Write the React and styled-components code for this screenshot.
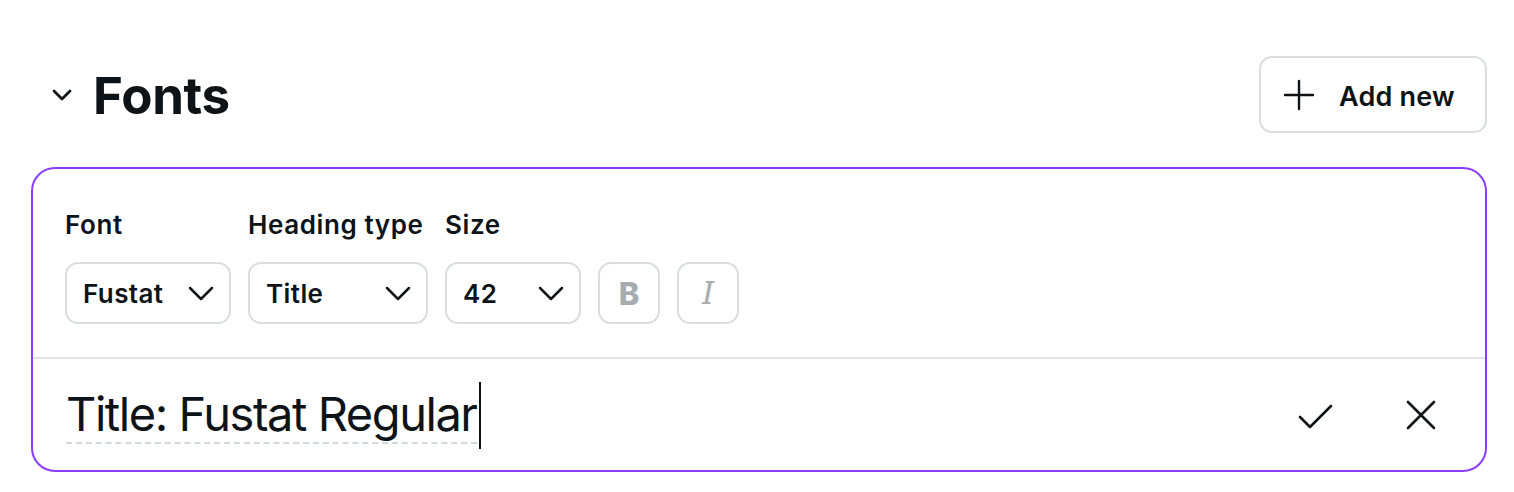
import React from 'react';
import styled, { createGlobalStyle } from 'styled-components';

const GlobalStyle = createGlobalStyle`
    body {
        margin: 0;
        background: #ffffff;
        font-family: Inter, "Noto Sans", sans-serif;
        color: #0e1318;
    }
`;

const Page = styled.div`
    width: 1456px;
    padding: 56px 0 0 31px;
`;

const Header = styled.div`
    display: flex;
    align-items: center;
    justify-content: space-between;
    height: 77px;
`;

const HeaderLeft = styled.div`
    display: flex;
    align-items: center;
    padding-left: 20px;
    gap: 20px;
`;

const Title = styled.h2`
    margin: 0;
    font-size: 51px;
    font-weight: 650;
    letter-spacing: -0.3px;
    color: #0e1318;
    line-height: 1;
    margin-top: 2px;
`;

const AddButton = styled.button`
    display: flex;
    align-items: center;
    gap: 24px;
    height: 77px;
    width: 228px;
    padding: 3px 22px 0;
    box-sizing: border-box;
    background: #fff;
    border: 2px solid #dadde1;
    border-radius: 13px;
    font-family: inherit;
    font-size: 27px;
    font-weight: 600;
    letter-spacing: 0.2px;
    color: #0e1318;
    cursor: pointer;

    svg {
        margin-top: -3px;
    }
`;

const Card = styled.div`
    margin-top: 34px;
    border: 2px solid #8b3dff;
    border-radius: 24px;
    height: 305px;
    box-sizing: border-box;
    display: flex;
    flex-direction: column;
`;

const Controls = styled.div`
    display: flex;
    align-items: flex-end;
    gap: 17px;
    padding: 40px 32px 33px;
    border-bottom: 2px solid #e2e4e7;
`;

const Field = styled.div`
    display: flex;
    flex-direction: column;
    gap: 21px;
`;

const Label = styled.span`
    font-size: 26px;
    font-weight: 600;
    line-height: 32px;
    letter-spacing: 0.6px;
`;

const Select = styled.div`
    display: flex;
    align-items: center;
    justify-content: space-between;
    width: ${p => p.$w}px;
    height: 62px;
    box-sizing: border-box;
    padding: 0 15px 0 16px;
    border: 2px solid #dadde1;
    border-radius: 13px;
    font-size: 26px;
    font-weight: 600;
    letter-spacing: 0.4px;
`;

const StyleButton = styled.div`
    display: flex;
    align-items: center;
    justify-content: center;
    width: 62px;
    height: 62px;
    box-sizing: border-box;
    border: 2px solid #dadde1;
    border-radius: 13px;
    color: #a7acb1;
    font-size: 31px;
    font-weight: ${p => (p.$italic ? 400 : 800)};
    font-style: ${p => (p.$italic ? 'italic' : 'normal')};
    font-family: ${p => (p.$italic ? '"DejaVu Serif", serif' : 'inherit')};
`;

const EditRow = styled.div`
    flex: 1;
    display: flex;
    align-items: center;
    justify-content: space-between;
    padding: 0 49px 0 33px;
`;

const Preview = styled.div`
    display: flex;
    align-items: center;
`;

const PreviewText = styled.span`
    font-size: 47px;
    font-weight: 400;
    line-height: 56px;
    letter-spacing: -1.45px;
    border-bottom: 2px dashed #d4d7db;
`;

const Caret = styled.span`
    width: 2px;
    height: 67px;
    background: #0e1318;
    margin-left: 2px;
    margin-top: 2px;
`;

const Actions = styled.div`
    display: flex;
    align-items: center;
    gap: 70px;
`;

const Chevron = () => (
    <svg width="26" height="26" viewBox="0 0 26 26" fill="none" stroke="#0e1318" strokeWidth="2.5" strokeLinecap="round" strokeLinejoin="round">
        <path d="M2 8l11 11 11-11" />
    </svg>
);

const App = () => (
    <>
        <GlobalStyle />
        <Page>
            <Header>
                <HeaderLeft>
                    <svg width="22" height="22" viewBox="0 0 22 22" fill="none" stroke="#0e1318" strokeWidth="2.8" strokeLinecap="round" strokeLinejoin="round">
                        <path d="M3 7l8 8 8-8" />
                    </svg>
                    <Title>Fonts</Title>
                </HeaderLeft>
                <AddButton>
                    <svg width="32" height="32" viewBox="0 0 32 32" fill="none" stroke="#0e1318" strokeWidth="2.4" strokeLinecap="round">
                        <path d="M16 2v28M2 16h28" />
                    </svg>
                    Add new
                </AddButton>
            </Header>
            <Card>
                <Controls>
                    <Field>
                        <Label>Font</Label>
                        <Select $w={166}>Fustat<Chevron /></Select>
                    </Field>
                    <Field>
                        <Label>Heading type</Label>
                        <Select $w={180}>Title<Chevron /></Select>
                    </Field>
                    <Field>
                        <Label>Size</Label>
                        <Select $w={136}>42<Chevron /></Select>
                    </Field>
                    <StyleButton>B</StyleButton>
                    <StyleButton $italic>I</StyleButton>
                </Controls>
                <EditRow>
                    <Preview>
                        <PreviewText>Title: Fustat Regular</PreviewText>
                        <Caret />
                    </Preview>
                    <Actions>
                        <svg width="40" height="40" viewBox="0 0 40 40" fill="none" stroke="#0e1318" strokeWidth="2.6" strokeLinecap="round" strokeLinejoin="round">
                            <path d="M4 22l10 10 21-21" />
                        </svg>
                        <svg width="30" height="30" viewBox="0 0 30 30" fill="none" stroke="#0e1318" strokeWidth="2.6" strokeLinecap="round">
                            <path d="M2 2l26 26M28 2L2 28" />
                        </svg>
                    </Actions>
                </EditRow>
            </Card>
        </Page>
    </>
);

export default App;
